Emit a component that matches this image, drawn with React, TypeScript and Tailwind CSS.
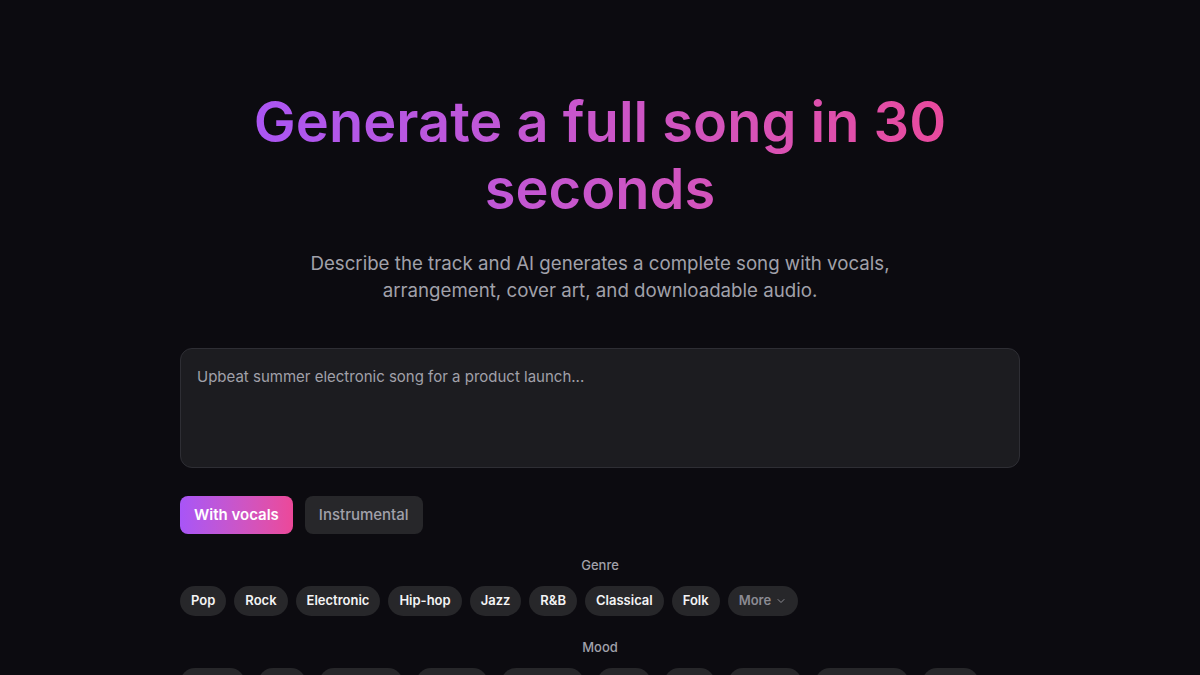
import { ChevronDown } from 'lucide-react';

const genres = ['Pop', 'Rock', 'Electronic', 'Hip-hop', 'Jazz', 'R&B', 'Classical', 'Folk'];
const moods = ['Happy', 'Sad', 'Energetic', 'Dreamy', 'Romantic', 'Dark', 'Epic', 'Relaxed', 'Aggressive', 'Calm'];

function Pill({ label, wide }: { label: string; wide?: boolean }) {
  return (
    <button
      className={
        wide
          ? 'h-[30px] px-3 rounded-full bg-[#27272a] text-[13px] font-semibold text-[#f4f4f5] whitespace-nowrap'
          : 'h-[30px] px-[11px] rounded-full bg-[#27272a] text-[13px] font-semibold text-[#f4f4f5] whitespace-nowrap'
      }
    >
      {label}
    </button>
  );
}

export default function App() {
  return (
    <div
      className="min-h-screen w-full bg-[#0c0b10] text-white"
      style={{ fontFamily: 'Inter, "Noto Sans", sans-serif' }}
    >
      <div className="max-w-[840px] mx-auto pt-[89px]">
        <h1 className="max-w-[760px] mx-auto text-center text-[56px] leading-[67px] font-semibold bg-gradient-to-r from-[#a855f7] to-[#ec4899] bg-clip-text text-transparent">
          Generate a full song in 30 seconds
        </h1>
        <p className="max-w-2xl mx-auto mt-[27px] text-center text-[18.7px] leading-[27px] text-[#a1a1aa]">
          Describe the track and AI generates a complete song with vocals, arrangement, cover art, and downloadable audio.
        </p>

        <textarea
          className="mt-[44px] block w-full h-[120px] resize-none rounded-xl border border-[#2e2e34] bg-[#1c1c20] px-4 py-[17px] text-[15px] text-white placeholder:text-[#a1a1aa] outline-none"
          placeholder="Upbeat summer electronic song for a product launch..."
        />

        <div className="mt-7 flex gap-3">
          <button className="h-[38px] px-[14px] rounded-lg bg-gradient-to-r from-[#a855f7] to-[#ec4899] text-[15px] font-semibold text-white">
            With vocals
          </button>
          <button className="h-[38px] px-[14px] rounded-lg bg-[#27272a] text-[15px] font-medium text-[#a1a1aa]">
            Instrumental
          </button>
        </div>

        <div className="mt-[22px] text-center text-[13px] font-medium text-[#a1a1aa]">Genre</div>
        <div className="mt-[10px] flex flex-wrap gap-2">
          {genres.map((g) => (
            <Pill key={g} label={g} />
          ))}
          <button className="h-[30px] px-[11px] rounded-full bg-[#27272a] text-[13px] font-semibold text-[#8b8b93] flex items-center gap-1">
            More
            <ChevronDown className="w-3 h-3" strokeWidth={2} />
          </button>
        </div>

        <div className="mt-[22px] text-center text-[13px] font-medium text-[#a1a1aa]">Mood</div>
        <div className="mt-[11px] flex flex-wrap gap-[13px] pb-10">
          {moods.map((m) => (
            <Pill key={m} label={m} wide />
          ))}
        </div>
      </div>
    </div>
  );
}
